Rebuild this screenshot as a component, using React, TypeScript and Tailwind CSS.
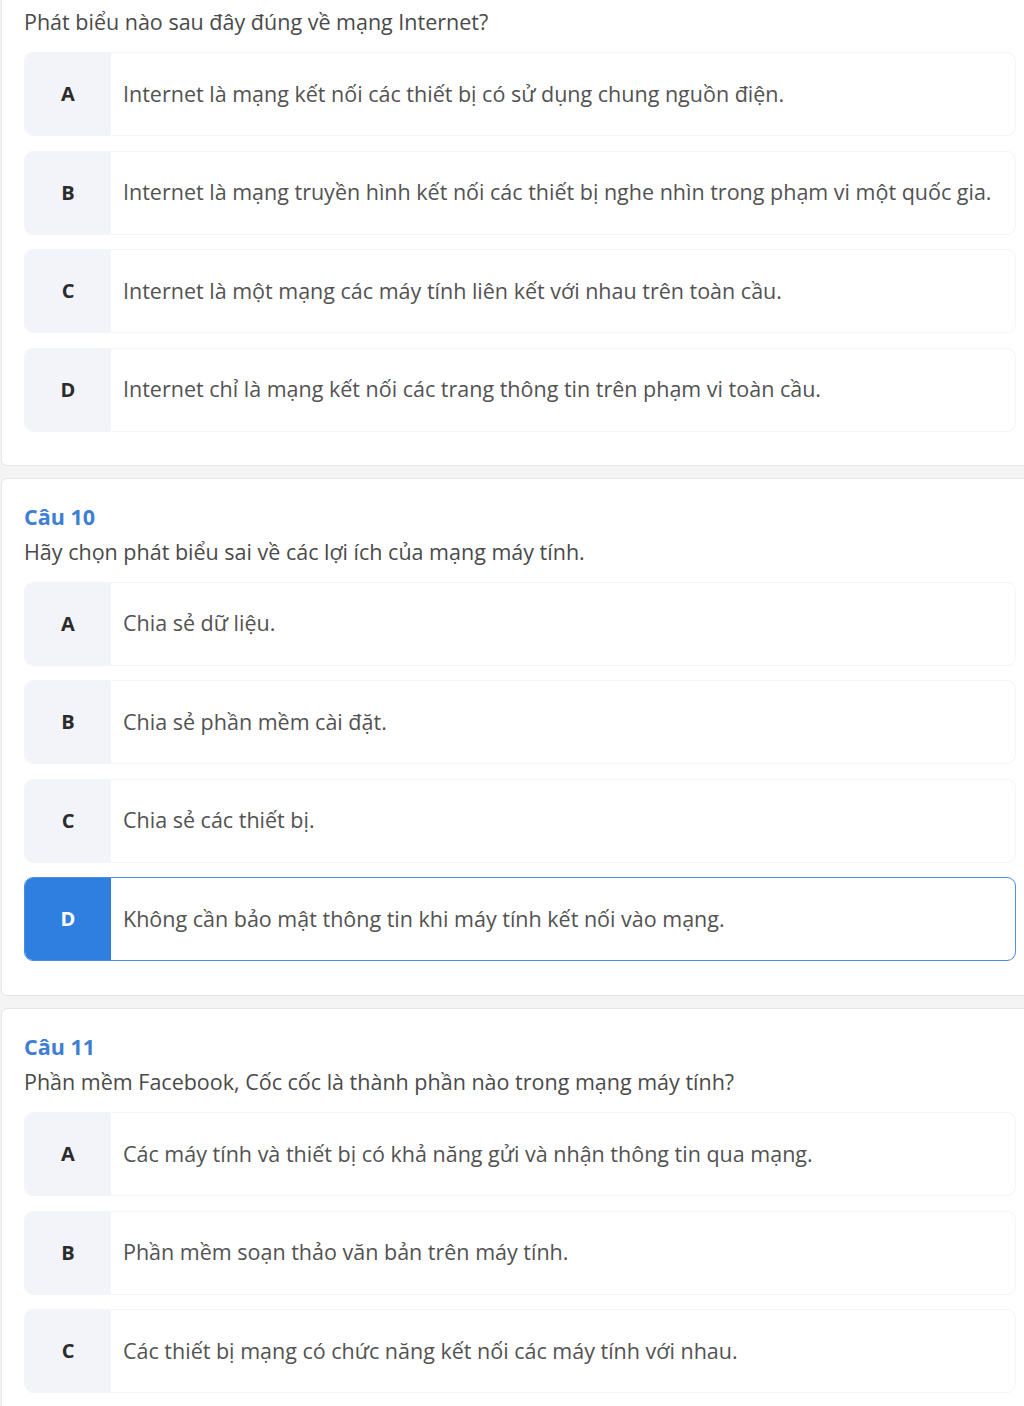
import React from 'react';

type Option = { key: string; text: string };
type Question = { title?: string; prompt: string; options: Option[]; selected?: string };

const questions: Question[] = [
  {
    prompt: 'Phát biểu nào sau đây đúng về mạng Internet?',
    options: [
      { key: 'A', text: 'Internet là mạng kết nối các thiết bị có sử dụng chung nguồn điện.' },
      { key: 'B', text: 'Internet là mạng truyền hình kết nối các thiết bị nghe nhìn trong phạm vi một quốc gia.' },
      { key: 'C', text: 'Internet là một mạng các máy tính liên kết với nhau trên toàn cầu.' },
      { key: 'D', text: 'Internet chỉ là mạng kết nối các trang thông tin trên phạm vi toàn cầu.' },
    ],
  },
  {
    title: 'Câu 10',
    prompt: 'Hãy chọn phát biểu sai về các lợi ích của mạng máy tính.',
    selected: 'D',
    options: [
      { key: 'A', text: 'Chia sẻ dữ liệu.' },
      { key: 'B', text: 'Chia sẻ phần mềm cài đặt.' },
      { key: 'C', text: 'Chia sẻ các thiết bị.' },
      { key: 'D', text: 'Không cần bảo mật thông tin khi máy tính kết nối vào mạng.' },
    ],
  },
  {
    title: 'Câu 11',
    prompt: 'Phần mềm Facebook, Cốc cốc là thành phần nào trong mạng máy tính?',
    options: [
      { key: 'A', text: 'Các máy tính và thiết bị có khả năng gửi và nhận thông tin qua mạng.' },
      { key: 'B', text: 'Phần mềm soạn thảo văn bản trên máy tính.' },
      { key: 'C', text: 'Các thiết bị mạng có chức năng kết nối các máy tính với nhau.' },
    ],
  },
];

const OptionRow: React.FC<{ option: Option; active: boolean }> = ({ option, active }) => (
  <div
    className={`flex h-[84px] rounded-[9px] overflow-hidden ${
      active ? 'border-[1.5px] border-[#4a8ee0]' : 'border border-[#f4f5f8]'
    }`}
  >
    <div
      className={`w-[86px] shrink-0 flex items-center justify-center text-[20px] font-bold ${
        active ? 'bg-[#2f7fe0] text-white' : 'bg-[#f2f4f9] text-[#2b2b2b]'
      }`}
    >
      {option.key}
    </div>
    <div className="flex items-center pl-[12px] text-[21.5px] text-[#525252] bg-white whitespace-nowrap">
      {option.text}
    </div>
  </div>
);

export default function App() {
  return (
    <div className="bg-[#f4f4f4] h-[1406px] overflow-hidden font-['Open_Sans','Noto_Sans',sans-serif]">
      {questions.map((q, i) => (
        <div
          key={i}
          className={`bg-white ml-[1px] -mr-[10px] border border-[#e6e6e6] rounded-[6px] pl-[22px] pr-[17px] ${
            i === 0 ? 'border-t-0 rounded-t-none pt-[7px] pb-[33px]' : 'mt-[12px] pt-[26px] pb-[34px]'
          }`}
        >
          {q.title && (
            <div className="text-[21.5px] font-bold text-[#3d7ed6] leading-[24px] mb-[8px]">{q.title}</div>
          )}
          <div className="text-[21.5px] text-[#4a4a4a] leading-[30px] mb-[15px]">{q.prompt}</div>
          <div className="flex flex-col gap-[14.5px]">
            {q.options.map((o) => (
              <OptionRow key={o.key} option={o} active={q.selected === o.key} />
            ))}
          </div>
        </div>
      ))}
    </div>
  );
}
